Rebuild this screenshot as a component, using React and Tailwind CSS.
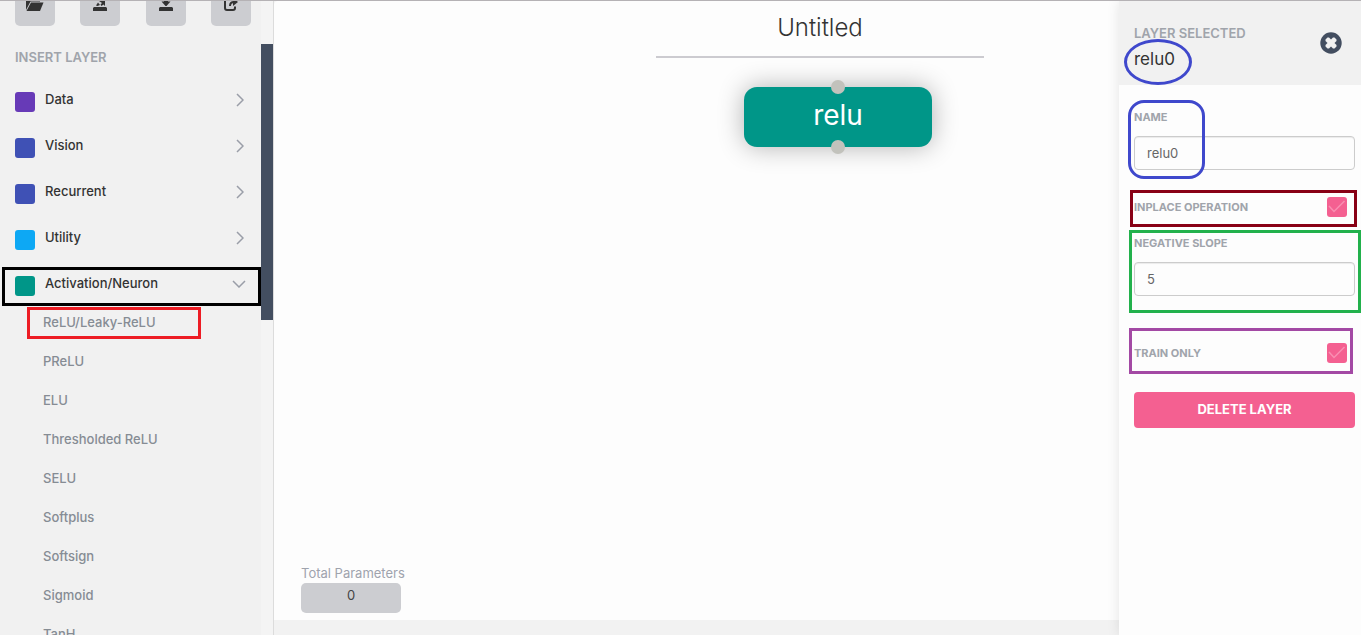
import React from "react";

const categories = [
  { name: "Data", color: "bg-[#673ab7]" },
  { name: "Vision", color: "bg-[#3f51b5]" },
  { name: "Recurrent", color: "bg-[#3f51b5]" },
  { name: "Utility", color: "bg-[#0da8f4]" },
  { name: "Activation/Neuron", color: "bg-[#009688]", open: true },
];

const activations = [
  "ReLU/Leaky-ReLU",
  "PReLU",
  "ELU",
  "Thresholded ReLU",
  "SELU",
  "Softplus",
  "Softsign",
  "Sigmoid",
  "TanH",
];

function FolderIcon() {
  return (
    <svg viewBox="0 0 20 16" className="h-4 w-5" fill="#333">
      <path d="M1 15 V5 Q1 3.500 2.500 3.500 H6 L8 5 H15 V6.500 H5.500 Z" />
      <path d="M6 7.500 H18.500 L15 16 H1.500 Z" />
    </svg>
  );
}

function ImportIcon() {
  return (
    <svg viewBox="0 0 14 16" className="h-4 w-3.5" fill="#333">
      <path d="M1 12 H13 L14 13 V16 H0 V13 Z" />
      <path d="M3 10.500 L5 7.500 L7 10 L4.500 11 Z" />
      <path d="M6 6 H12 V11 L10.500 9.500 L8.500 11 L7.500 9.500 L9 8 Z" />
    </svg>
  );
}

function ExportIcon() {
  return (
    <svg viewBox="0 0 14 16" className="h-4 w-3.5" fill="#333">
      <path d="M1 12 H13 L14 13 V16 H0 V13 Z" />
      <path d="M5 2 H9 V6.500 H11.500 L7.500 11 H6.500 L2.500 6.500 H5 Z" />
    </svg>
  );
}

function ShareIcon() {
  return (
    <svg viewBox="0 0 16 16" className="size-4" fill="none" stroke="#333" strokeWidth="2">
      <path d="M6 4 H4 Q2 4 2 6 V13 Q2 15 4 15 H10 Q12 15 12 13 V11.500" />
      <path d="M7 11 Q7 7 11 7" />
      <path d="M10 3 L15 7 L10 11 Z" fill="#333" stroke="none" />
    </svg>
  );
}

const tools = [
  { label: "Open", Icon: FolderIcon },
  { label: "Import", Icon: ImportIcon },
  { label: "Export", Icon: ExportIcon },
  { label: "Share", Icon: ShareIcon },
];

function Chevron({ open }) {
  return open ? (
    <svg viewBox="0 0 14 8" className="h-2 w-3.5" fill="none" stroke="#9a9ea8" strokeWidth="1.500">
      <path d="M1 1 L7 7 L13 1" />
    </svg>
  ) : (
    <svg viewBox="0 0 8 14" className="mr-0.5 h-3.5 w-2" fill="none" stroke="#9a9ea8" strokeWidth="1.500">
      <path d="M1 1 L7 7 L1 13" />
    </svg>
  );
}

function Sidebar() {
  return (
    <div className="flex w-[274px] shrink-0 border-r border-[#dcdcdc] bg-[#f1f1f1]">
      <nav className="flex-1 overflow-hidden">
        <div className="flex h-[25px] items-end justify-between overflow-hidden pr-2.5 pl-[15px]">
          {tools.map(({ label, Icon }) => (
            <button
              key={label}
              aria-label={label}
              className="flex h-10 w-10 shrink-0 items-end justify-center rounded-[5px] bg-[#cccdd1] pb-[15px]"
            >
              <Icon />
            </button>
          ))}
        </div>
        <h2 className="mt-[21px] mb-[10px] pl-[15px] text-[13px] leading-5 font-semibold text-[#a0a4ab]">
          INSERT LAYER
        </h2>
        {categories.map(({ name, color, open }) => (
          <button
            key={name}
            className="relative flex h-[46px] w-full items-center pr-[15px] pl-[15px] text-left text-[13px] font-medium text-[#333]"
          >
            <span className={"mt-1 mr-2.5 size-5 rounded-[3px] " + color} />
            <span className="flex-1">{name}</span>
            <Chevron open={open} />
            {open && (
              <span className="absolute top-1.5 right-0 bottom-px left-0.5 border-3 border-black" />
            )}
          </button>
        ))}
        <ul className="-mt-1">
          {activations.map((name, i) => (
            <li key={name} className="relative h-[39px] pl-[43px]">
              <a href="#" className="text-[13px] leading-[39px] font-medium text-[#868c94]">
                {name}
              </a>
              {i === 0 && (
                <span className="pointer-events-none absolute top-1 left-[27px] h-8 w-[174px] border-3 border-[#ed1c24]" />
              )}
            </li>
          ))}
        </ul>
      </nav>
      <div className="w-3 bg-[#f4f4f4] pt-[43px]">
        <div className="h-[276px] bg-[#434e60]" />
      </div>
    </div>
  );
}

function Canvas() {
  return (
    <main className="relative flex flex-1 flex-col bg-[#f2f2f2] pb-[15px]">
      <div className="flex flex-1 flex-col items-center justify-between rounded-tl-[4px] bg-[#fdfdfd] pl-[5px]">
        <h1 className="w-[328px] border-b-2 border-[#cccbd0] pt-2.5 pb-[11px] text-center text-2xl leading-[34px] font-light text-[#333]">
          Untitled
        </h1>
        <div className="mb-[7px] ml-[22px] w-[102px] self-start text-[13px]">
          <div className="leading-5 whitespace-nowrap text-[#9fa3ad]">Total Parameters</div>
          <div className="h-[30px] w-[100px] rounded-[5px] bg-[#cccdd1] text-center leading-6 text-[#444]">
            0
          </div>
        </div>
      </div>
      <div className="absolute top-[86px] left-[470px] flex h-[60px] w-[188px] items-center justify-center rounded-[13px] bg-[#009688] pb-1 text-[28px] text-white shadow-[0_0_26px_rgba(0,0,0,0.3)]">
        relu
        <span className="absolute -top-[7px] left-[87px] size-3.5 rounded-full bg-[#c2c2bc]" />
        <span className="absolute -bottom-[7px] left-[87px] size-3.5 rounded-full bg-[#c2c2bc]" />
      </div>
    </main>
  );
}

const labelStyle = "text-[11px] leading-4 font-bold text-[#a0a4ab]";
const inputStyle =
  "h-[34px] w-full rounded-[4px] border border-[#ccc] bg-[#fdfdfd] px-3 text-[13px] text-[#666] shadow-[inset_0_1px_1px_rgba(0,0,0,0.075)]";

function Check({ id, label }) {
  return (
    <div className="flex h-5 items-center justify-between pr-2">
      <label htmlFor={id} className={labelStyle}>
        {label}
      </label>
      <span className="grid size-5">
        <input
          id={id}
          type="checkbox"
          defaultChecked
          className="col-start-1 row-start-1 size-5 appearance-none rounded-[3px] bg-[#f46091]"
        />
        <svg
          viewBox="0 0 20 20"
          className="pointer-events-none col-start-1 row-start-1 size-5"
          fill="none"
          stroke="#f98fb2"
          strokeWidth="1.500"
        >
          <path d="M2 9 L7 14.500 L17.500 4" />
        </svg>
      </span>
    </div>
  );
}

function Inspector() {
  return (
    <aside className="relative z-10 -ml-[242px] w-[242px] shrink-0 bg-[#fdfdfd] shadow-[0_0_12px_rgba(0,0,0,0.1)]">
      <header className="flex h-[84px] items-center justify-between bg-[#f1f1f1] pr-[19px] pl-[15px]">
        <div className="pt-3.5">
          <div className="text-[13px] leading-5 font-semibold text-[#a0a4ab]">LAYER SELECTED</div>
          <div className="relative pt-0.5 pb-1 text-[17px] leading-7 text-[#333]">
            relu0
            <span className="absolute -top-1 -left-2.5 h-[46px] w-[68px] rounded-[50%] border-3 border-[#3f48cc]" />
          </div>
        </div>
        <button aria-label="Close">
          <svg viewBox="0 0 22 22" className="size-[22px]">
            <circle cx="11" cy="11" r="10.700" fill="#434e60" />
            <path
              d="M7.500 5.500 H9 L11 7.500 L13 5.500 H14.500 L16.500 7.500 V9 L14.500 11 L16.500 13 V14.500 L14.500 16.500 H13 L11 14.500 L9 16.500 H7.500 L5.500 14.500 V13 L7.500 11 L5.500 9 V7.500 Z"
              fill="#f1f1f1"
            />
          </svg>
        </button>
      </header>
      <form className="pr-1.5 pl-[15px]">
        <div className="relative pt-6">
          <label htmlFor="name" className={"block " + labelStyle}>
            NAME
          </label>
          <input id="name" defaultValue="relu0" className={"mt-[11px] " + inputStyle} />
          <span className="pointer-events-none absolute top-[15px] -left-1.5 h-[79px] w-[77px] rounded-[16px] border-3 border-[#3f48cc]" />
        </div>
        <div className="relative mt-[27px]">
          <Check id="inplace" label="INPLACE OPERATION" />
          <span className="pointer-events-none absolute -top-[7px] -right-0.5 -bottom-[10px] -left-1 border-3 border-[#880015]" />
        </div>
        <div className="relative mt-[18px]">
          <label htmlFor="slope" className={"block " + labelStyle}>
            NEGATIVE SLOPE
          </label>
          <input id="slope" defaultValue="5" className={"mt-[11px] " + inputStyle} />
          <span className="pointer-events-none absolute -top-[5px] -right-1.5 -bottom-[17px] -left-[5px] border-3 border-[#22b14c]" />
        </div>
        <div className="relative mt-[47px]">
          <Check id="train" label="TRAIN ONLY" />
          <span className="pointer-events-none absolute -top-[15px] right-0.5 -bottom-[11px] -left-[5px] border-3 border-[#a349a4]" />
        </div>
        <button
          type="button"
          className="mt-[29px] h-9 w-full rounded-[4px] bg-[#f46091] text-[13px] font-bold text-white"
        >
          DELETE LAYER
        </button>
      </form>
    </aside>
  );
}

export default function App() {
  return (
    <div className="flex h-screen overflow-hidden border-t border-[#b5b2b5] bg-[#f1f1f1] font-['Inter',sans-serif]">
      <Sidebar />
      <Canvas />
      <Inspector />
    </div>
  );
}
